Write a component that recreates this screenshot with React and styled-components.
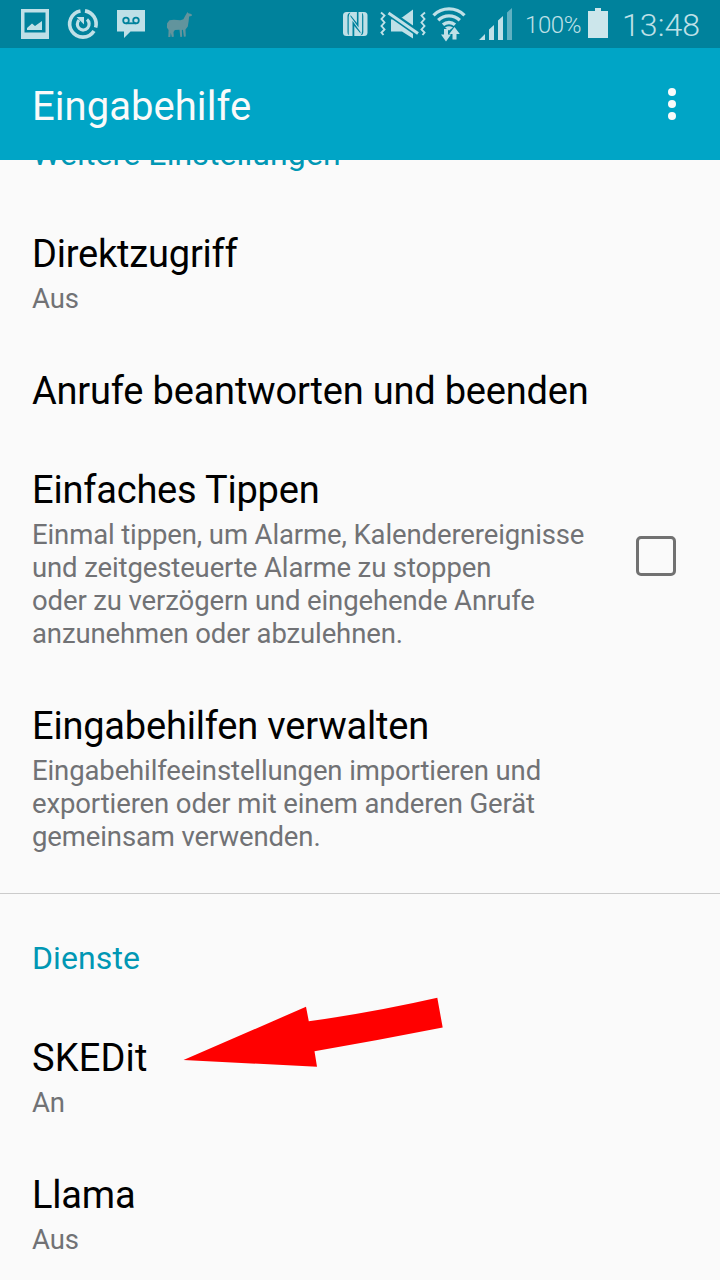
import React from 'react';
import styled, { createGlobalStyle } from 'styled-components';

const GlobalStyle = createGlobalStyle`
  * {
    box-sizing: border-box;
  }
  body {
    margin: 0;
    background: #fafafa;
    font-family: Roboto, sans-serif;
  }
`;

const Screen = styled.div`
  position: relative;
  display: flex;
  flex-direction: column;
  width: 720px;
  height: 1280px;
  overflow: hidden;
  background: #fafafa;
`;

const StatusBar = styled.div`
  display: flex;
  flex: none;
  justify-content: space-between;
  height: 48px;
  background: #00829c;
  color: #bfe0e7;
`;

const StatusIcons = styled.svg`
  display: block;
  flex: none;
  width: ${props => props.$width}px;
  height: 48px;
`;

const StatusInfo = styled.div`
  display: flex;
`;

const Percent = styled.span`
  width: 66px;
  padding-left: 4px;
  font-size: 24px;
  font-weight: 300;
  letter-spacing: -0.4px;
  line-height: 50px;
  white-space: nowrap;
`;

const Clock = styled.span`
  width: 111px;
  padding-left: 13px;
  font-size: 32px;
  font-weight: 300;
  letter-spacing: 0.1px;
  line-height: 50px;
  white-space: nowrap;
`;

const ActionBar = styled.header`
  display: flex;
  flex: none;
  align-items: center;
  justify-content: space-between;
  height: 112px;
  padding: 0 40px 0 32px;
  background: #00a5c6;
`;

const ScreenTitle = styled.h1`
  margin: 6px 0 0;
  color: #fafafa;
  font-size: 40px;
  font-weight: 400;
  letter-spacing: 0.05px;
  line-height: 48px;
`;

const MenuButton = styled.button`
  display: flex;
  flex-direction: column;
  gap: 4px;
  padding: 0 4px;
  border: 0;
  background: none;
`;

const Dot = styled.i`
  width: 8px;
  height: 8px;
  border-radius: 50%;
  background: #fafafa;
`;

const List = styled.main`
  flex: 1;
  min-height: 0;
  overflow: hidden;
`;

const SectionTitle = styled.h2`
  margin: ${props => (props.$scrolled ? '-25px 0 32px' : '45px 0 32px')};
  padding-left: 32px;
  color: #0097b4;
  font-size: 32px;
  font-weight: 400;
  letter-spacing: 0.1px;
  line-height: 38px;
`;

const Row = styled.div`
  display: flex;
  align-items: center;
  justify-content: space-between;
  padding: 27px 44px 27px 32px;
`;

const RowTitle = styled.div`
  color: #000;
  font-size: 38px;
  letter-spacing: ${props => (props.$wide ? '0.15px' : '-0.2px')};
  line-height: 45px;
  white-space: nowrap;
`;

const Summary = styled.div`
  margin-top: 5px;
  color: #717275;
  font-size: 27.5px;
  letter-spacing: -0.12px;
  line-height: 33px;
  white-space: pre-line;
`;

const Checkbox = styled.span`
  flex: none;
  width: 40px;
  height: 40px;
  margin-bottom: 6px;
  border: 3px solid #717171;
  border-radius: 5px;
`;

const Divider = styled.hr`
  height: 1px;
  margin: 13px 0 0;
  border: 0;
  background: #cbcbcb;
`;

const Arrow = styled.svg`
  position: absolute;
  top: 990px;
  left: 180px;
  width: 270px;
  height: 85px;
`;

const settings = [
  { title: 'Direktzugriff', summary: 'Aus' },
  { title: 'Anrufe beantworten und beenden' },
  {
    title: 'Einfaches Tippen',
    summary:
      'Einmal tippen, um Alarme, Kalenderereignisse\nund zeitgesteuerte Alarme zu stoppen\noder zu verzögern und eingehende Anrufe\nanzunehmen oder abzulehnen.',
    checkbox: true,
  },
  {
    title: 'Eingabehilfen verwalten',
    summary:
      'Eingabehilfeeinstellungen importieren und\nexportieren oder mit einem anderen Gerät\ngemeinsam verwenden.',
  },
];

const services = [
  { title: 'SKEDit', summary: 'An', wide: true },
  { title: 'Llama', summary: 'Aus' },
];

function SettingRow({ item }) {
  return (
    <Row>
      <div>
        <RowTitle $wide={item.wide}>{item.title}</RowTitle>
        {item.summary && <Summary>{item.summary}</Summary>}
      </div>
      {item.checkbox && <Checkbox role='checkbox' aria-checked='false' />}
    </Row>
  );
}

/**
 * @desc picture, sync, voicemail and llama notifications
 */
function NotificationIcons() {
  return (
    <StatusIcons $width={210} viewBox='0 0 210 48' fill='currentColor'>
      <path
        fillRule='evenodd'
        d='M21 9h28v30H21zM24.5 12.5v20h21v-20z'
      />
      <path d='M27 30v-2l5-4.5 3 2.5 7-5v9z' />
      <g fill='none' stroke='currentColor'>
        <path strokeWidth='3.6' d='M80.5 10.9A13.2 13.2 0 1 0 94 31' />
        <path strokeWidth='3.6' d='M85 10.9A13.2 13.2 0 0 1 95.6 27.5' />
        <path strokeWidth='3.2' d='M79 20A5.9 5.9 0 1 0 87 19.6' />
      </g>
      <path d='M76.5 17h7.5v7.5z' />
      <path d='M117 10h28v21.5h-14.5L124 38v-6.5h-7z' />
      <g fill='none' stroke='#00829c' strokeWidth='1.8'>
        <circle cx='126' cy='20.5' r='2.8' />
        <circle cx='136' cy='20.5' r='2.8' />
        <path d='M126 23.3h10' />
      </g>
      <path
        fill='#62949d'
        d='M187.5 12l.8 1.2 3 .8.8 1.2-.8.9-2.2.3-.5 5-.8 5-2.3 3.2.3 6.8-1.9.4-1-7-1 .2.2 6.8-1.8.2-.8-7.2-4.6.2-1.4 2 .3 4.8-2 .2-1-4.3-.5 4.3-2 .1.3-7-1.7-2.5.2-4.4 2.4-2.9 4.4-.6 6.5.6 3-1 1.7-3.4z'
      />
    </StatusIcons>
  );
}

/**
 * @desc nfc, vibrate, wifi and signal strength
 */
function SystemIcons() {
  return (
    <StatusIcons $width={181} viewBox='340 0 181 48' fill='currentColor'>
      <rect x='343' y='12' width='24.5' height='24' rx='3.5' />
      <g fill='#00829c'>
        <path d='M350.5 12.5q-3 .5-3 3.500V32q0 2.500 1.200 3.300V17q0-3 1.800-4.500z' />
        <path d='M360.300 35.500q3-.5 3-3.500V16q0-2.500-1.200-3.300V31q0 3-1.800 4.500z' />
        <path d='M352.500 36V20.800l8 11.200v1.500l-6.200-7.500V36z' />
        <path d='M358.500 12v15.500l-8-11V15l6.400 8V12z' />
      </g>
      <g fill='none' stroke='currentColor' strokeWidth='1.9'>
        <path d='M381 12.5l3.5 3-3 3.5 3 3.5-3 3.5 3 3.5-3 3 2 2.5' />
        <path d='M425 12.5l-3.5 3 3 3.5-3 3.5 3 3.5-3 3.5 3 3-2 2.5' />
      </g>
      <path d='M391 19.5v12h11l11 7V9.5l-11 8z' />
      <path d='M388.5 12.5l30 21' stroke='#00829c' strokeWidth='7' />
      <path d='M388.5 13l29.5 20.5' stroke='currentColor' strokeWidth='3' />
      <g fill='none' stroke='currentColor' strokeWidth='3.3'>
        <path d='M433.5 15.3a22 22 0 0 1 31 0' />
        <path d='M438.2 20.3a15.5 15.5 0 0 1 21.6 0' />
        <path d='M443 24.8a9 9 0 0 1 12 0' />
      </g>
      <path d='M445 27.5q4-2.500 8 0l-4 3z' />
      <path d='M444 29h4v5.5h3l-5 7-5-7h3z' />
      <path d='M452.5 39.5h4V34h3.300l-5.300-7-5.300 7h3.300z' />
      <path d='M479 40l6-6v6zM489 40V29.5l5-4.5v15zM498 40V20.500l5-4.500v24z' />
      <path opacity='.5' d='M507 40V12.5L512 8v32z' />
    </StatusIcons>
  );
}

export default function App() {
  return (
    <Screen>
      <GlobalStyle />
      <StatusBar>
        <NotificationIcons />
        <StatusInfo>
          <SystemIcons />
          <Percent>100%</Percent>
          <StatusIcons $width={22} viewBox='587 0 22 48'>
            <path fill='#cce6eb' d='M588 11h7V8h6v3h7v27h-20z' />
          </StatusIcons>
          <Clock>13:48</Clock>
        </StatusInfo>
      </StatusBar>
      <ActionBar>
        <ScreenTitle>Eingabehilfe</ScreenTitle>
        <MenuButton aria-label='Menü'>
          <Dot />
          <Dot />
          <Dot />
        </MenuButton>
      </ActionBar>
      <List>
        <SectionTitle $scrolled>Weitere Einstellungen</SectionTitle>
        {settings.map(item => (
          <SettingRow key={item.title} item={item} />
        ))}
        <Divider />
        <SectionTitle>Dienste</SectionTitle>
        {services.map(item => (
          <SettingRow key={item.title} item={item} />
        ))}
      </List>
      <Arrow viewBox='180 990 270 85' fill='#f00'>
        <path d='M183.5 1060L306 1006.8l2.8 14.5Q375 1012 437.3 997.8l5.4 29.8Q380 1040 314.5 1051.3l2.5 15.4z' />
      </Arrow>
    </Screen>
  );
}
